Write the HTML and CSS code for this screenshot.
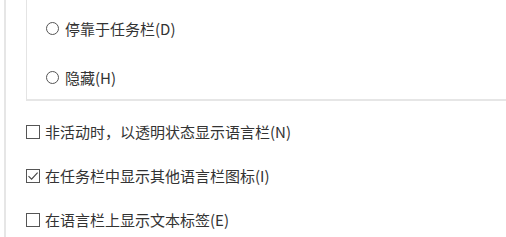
FILE: index.html
```html
<!DOCTYPE html>
<html lang="zh-CN">
<head>
  <meta charset="UTF-8" />
  <title>语言栏设置</title>
  <link rel="stylesheet" href="styles.css">
</head>
<body>
  <div class="page">
    <div class="group">
      <label class="option">
        <span class="radio"></span>
        <span class="text">停靠于任务栏(D)</span>
      </label>
      <label class="option">
        <span class="radio"></span>
        <span class="text">隐藏(H)</span>
      </label>
    </div>
    <div class="checks">
      <label class="check-row">
        <span class="box"></span>
        <span class="text">非活动时，以透明状态显示语言栏(N)</span>
      </label>
      <label class="check-row">
        <span class="box checked">
          <svg width="12" height="12" viewBox="0 0 12 12"><path d="M1.5 6.2 L4.6 9.2 L10.6 2.6" fill="none" stroke="#444" stroke-width="1.1"/></svg>
        </span>
        <span class="text">在任务栏中显示其他语言栏图标(I)</span>
      </label>
      <label class="check-row">
        <span class="box"></span>
        <span class="text">在语言栏上显示文本标签(E)</span>
      </label>
    </div>
  </div>
</body>
</html>
```

FILE: styles.css
```css
body {
  margin: 0;
  background: #fff;
  font-family: "Noto Sans CJK SC", "Noto Sans", sans-serif;
  font-size: 15px;
  color: #333;
}
.page {
  margin-left: 4px;
  border-left: 2px solid #e6e6e6;
  height: 237px;
  padding-left: 20px;
}
.group {
  border-left: 1px solid #e4e4e4;
  border-bottom: 2px solid #e6e6e6;
  height: 101px;
  box-sizing: border-box;
  padding: 4px 0 0 19px;
}
.option {
  display: flex;
  align-items: center;
  height: 49px;
}
.radio {
  width: 11px;
  height: 11px;
  border: 1px solid #555;
  border-radius: 50%;
  margin-right: 6px;
}
.checks {
  padding-top: 9px;
}
.check-row {
  display: flex;
  align-items: center;
  height: 44px;
}
.box {
  width: 12px;
  height: 12px;
  border: 1px solid #555;
  margin-right: 5px;
  display: flex;
  align-items: center;
  justify-content: center;
}
.text {
  line-height: 20px;
}
```
